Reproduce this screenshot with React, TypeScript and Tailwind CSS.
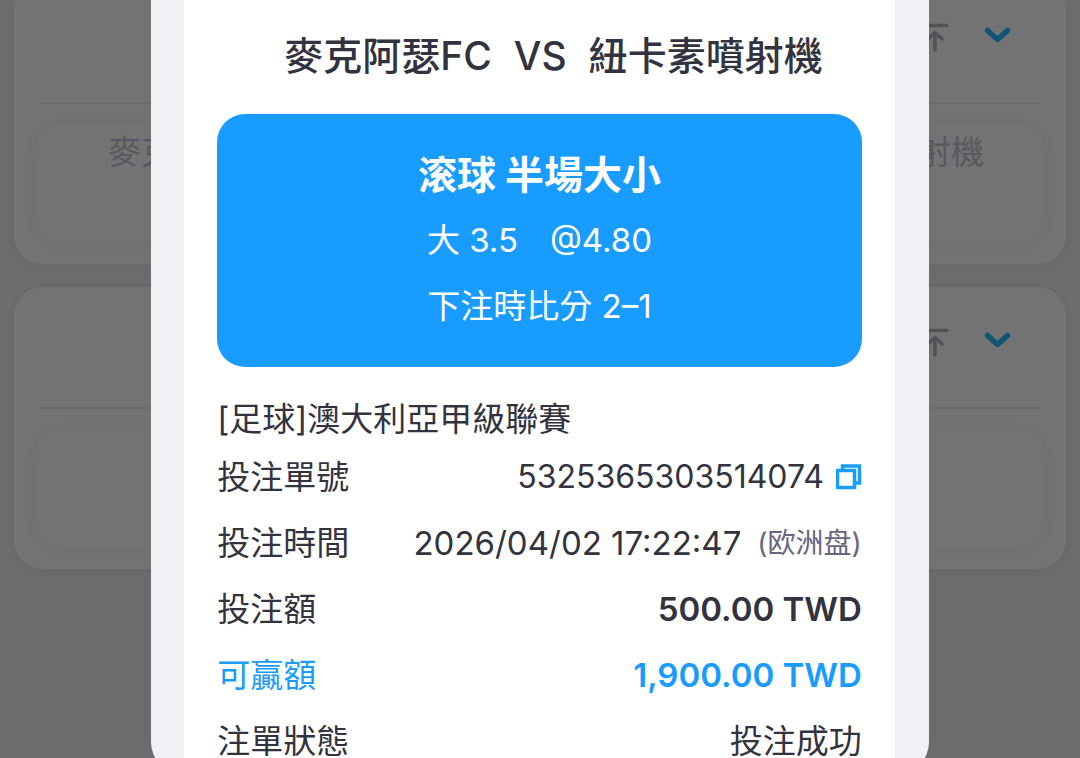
import { ReactNode } from "react";

function PinTopIcon() {
  return (
    <svg width="28" height="30" viewBox="0 0 28 30" fill="none" stroke="#b4b6be" strokeWidth="3.5" strokeLinecap="round" strokeLinejoin="round" aria-hidden="true">
      <path d="M2 2.500h24M14 27V9.500M7 16l7-6.500 7 6.500" />
    </svg>
  );
}

function ChevronIcon() {
  return (
    <svg width="28" height="18" viewBox="0 0 28 18" fill="none" stroke="#24b8ff" strokeWidth="5.500" strokeLinecap="round" strokeLinejoin="round" aria-hidden="true">
      <path d="M3.500 4.500 13.500 13.500l10-9" />
    </svg>
  );
}

function CopyIcon() {
  return (
    <svg width="26" height="26" viewBox="0 0 26 26" fill="none" stroke="#189cff" strokeWidth="3.5" aria-hidden="true">
      <path d="M1.500 6.500h17v17h-17z" />
      <path d="M6.500 6V2h17v17H19" />
    </svg>
  );
}

function BetCard({ home, away }: { home?: string; away?: string }) {
  return (
    <article className="rounded-[28px] bg-white px-[22px] pb-[22px] shadow-[0_2px_12px_rgba(0,0,0,0.06)]">
      <header className="mx-1 flex h-[122px] items-start justify-end gap-[35px] border-b-2 border-[#efeff1] px-7 pt-[39px]">
        <button type="button" aria-label="置頂" className="pt-0.5">
          <PinTopIcon />
        </button>
        <button type="button" aria-label="展開" className="pt-[5px]">
          <ChevronIcon />
        </button>
      </header>
      <div className="mt-5 flex h-[118px] justify-between rounded-3xl bg-white px-[60px] pt-1 shadow-[0_2px_18px_rgba(0,0,0,0.05)] text-[33px] leading-[48px] text-[#c4c4d0]">
        <span className="pl-3">{home}</span>
        <span>{away}</span>
      </div>
    </article>
  );
}

function Row({ label, children, accent = false }: { label: string; children: ReactNode; accent?: boolean }) {
  return (
    <div className={accent ? "flex h-[66px] items-center justify-between text-[#189cff]" : "flex h-[66px] items-center justify-between"}>
      <dt>{label}</dt>
      <dd className="flex items-center">{children}</dd>
    </div>
  );
}

export default function App() {
  return (
    <div className="relative min-h-screen overflow-hidden bg-[#f0f0f5] font-['Inter','Noto_Sans_CJK_TC',sans-serif] text-[33px] text-[#333340]">
      <main className="-mt-[18px] flex flex-col gap-[23px] px-[14px]">
        <BetCard home="麥克阿瑟FC" away="紐卡素噴射機" />
        <BetCard />
      </main>

      <div className="fixed inset-0 flex items-start justify-center overflow-hidden bg-black/55">
        <section role="dialog" aria-labelledby="match-title" className="w-[72%] overflow-hidden rounded-b-[32px] bg-[#f0f0f5] pr-[34px] pl-[33px]">
          <div className="bg-white px-[33px] pt-7">
            <h1 id="match-title" className="flex h-14 items-center justify-center gap-[22px] pl-7 text-[39px] font-medium whitespace-nowrap">
              <span>麥克阿瑟FC</span>
              <span>VS</span>
              <span>紐卡素噴射機</span>
            </h1>

            <div className="mt-[30px] flex flex-col items-center rounded-[28px] bg-[#189cff] pt-[29px] pb-7 text-white">
              <h2 className="text-[39px] leading-[64px] font-bold">滚球 半場大小</h2>
              <p className="flex gap-8 leading-[66px]">
                <span>大 3.5</span>
                <span>@4.80</span>
              </p>
              <p className="leading-[66px]">下注時比分 2–1</p>
            </div>

            <p className="mt-[27px] leading-[50px]">[足球]澳大利亞甲級聯賽</p>
            <dl className="leading-8">
              <Row label="投注單號">
                <span className="text-[32px]">5325365303514074</span>
                <button type="button" aria-label="複製" className="ml-3">
                  <CopyIcon />
                </button>
              </Row>
              <Row label="投注時間">
                <span>2026/04/02 17:22:47</span>
                <span className="ml-4 font-['Inter','Noto_Sans_CJK_SC',sans-serif] text-[28px] text-[#666680]">(欧洲盘)</span>
              </Row>
              <Row label="投注額">
                <strong className="font-semibold">500.00 TWD</strong>
              </Row>
              <Row label="可贏額" accent>
                <strong className="font-semibold">1,900.00 TWD</strong>
              </Row>
              <Row label="注單狀態">投注成功</Row>
            </dl>
          </div>
        </section>
      </div>
    </div>
  );
}
